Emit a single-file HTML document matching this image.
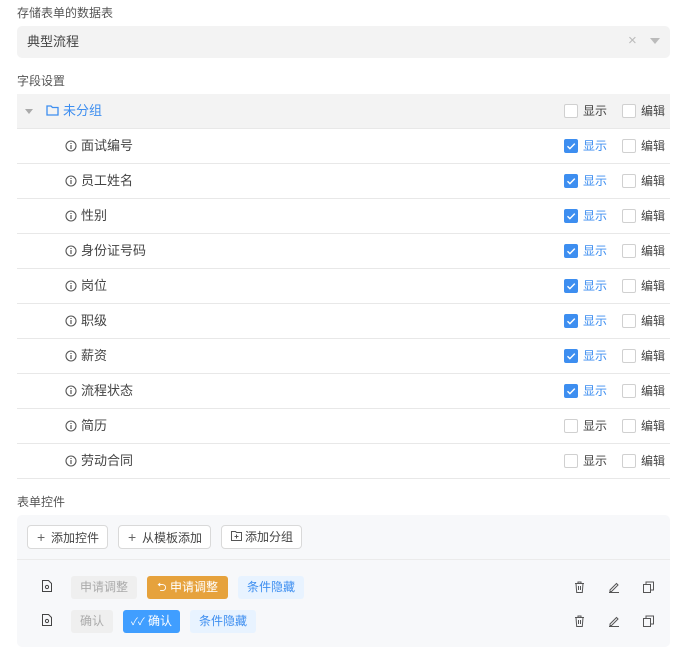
<!DOCTYPE html>
<html><head><meta charset="utf-8"><style>
*{box-sizing:border-box;margin:0;padding:0}
body{width:687px;height:659px;background:#fff;font-family:"Liberation Sans","Noto Sans CJK SC",sans-serif;font-size:13px;color:#444;position:relative;overflow:hidden}
.abs{position:absolute}
.lbl{position:absolute;left:17px;color:#555;font-size:12px;line-height:16px}
.sel{left:17px;top:26px;width:653px;height:32px;background:#f3f3f3;border-radius:5px}
.row{position:absolute;left:17px;width:653px;height:35px;border-bottom:1px solid #e8e8e8}
.cb{position:absolute;width:14px;height:14px;border:1px solid #d0d0d0;border-radius:2px;background:#fff;top:10px}
.cb.on{background:#3d8ef0;border-color:#3d8ef0}
.ct{position:absolute;top:9px;font-size:12px;line-height:16px;color:#444}
.ct.b{color:#3d8ef0}
.name{position:absolute;left:64px;top:9px;line-height:16px;color:#444}
.btn{position:absolute;top:525px;height:24px;border:1px solid #d9d9d9;border-radius:4px;background:#fff;line-height:22px;font-size:12px;color:#444;padding-left:9px}
.pl{display:inline-block;width:14px;color:#666;font-size:14px}
.tag{position:absolute;height:23px;line-height:23px;border-radius:3px;font-size:12px;text-align:center}
</style></head><body>
<div class="lbl" style="top:5px">存储表单的数据表</div>
<div class="abs sel"><span class="abs" style="left:10px;top:8px;line-height:16px">典型流程</span>
<span class="abs" style="left:611px;top:7px;color:#bbb;font-size:15px;line-height:16px">×</span>
<svg class="abs" style="left:633px;top:12px" width="10" height="6"><path d="M0 0h10L5 6z" fill="#bbb"/></svg></div>
<div class="lbl" style="top:73px">字段设置</div>

<div class="row" style="top:94px;background:#f3f3f3">
<svg class="abs" style="left:8px;top:15px" width="8" height="5"><path d="M0 0h8L4 5z" fill="#aaa"/></svg>
<svg class="abs" style="left:29px;top:11px" width="13" height="11" viewBox="0 0 13 11"><path d="M1 1h4l1.5 1.5H12V10H1z" fill="none" stroke="#3d8ef0" stroke-width="1.3"/></svg>
<span class="abs" style="left:46px;top:9px;line-height:16px;color:#3d8ef0">未分组</span>
<div class="cb" style="left:547px"></div><span class="ct" style="left:566px">显示</span>
<div class="cb" style="left:605px"></div><span class="ct" style="left:624px">编辑</span>
</div>

<div id="rows"></div>
<script>
var n=["面试编号","员工姓名","性别","身份证号码","岗位","职级","薪资","流程状态","简历","劳动合同"];
var h="";
for(var i=0;i<n.length;i++){var on=i<8;
h+='<div class="row" style="top:'+(129+i*35)+'px"><svg class="abs" style="left:48px;top:11px" width="12" height="12" viewBox="0 0 12 12"><circle cx="6" cy="6" r="5" fill="none" stroke="#555" stroke-width="1.1"/><path d="M6 5v4M6 3v1" stroke="#555" stroke-width="1.2"/></svg><span class="name">'+n[i]+'</span>'+
'<div class="cb'+(on?' on':'')+'" style="left:547px">'+(on?'<svg width="12" height="12" viewBox="0 0 12 12"><path d="M2.5 6.2l2.4 2.4L9.8 3.6" fill="none" stroke="#fff" stroke-width="1.4"/></svg>':'')+'</div><span class="ct'+(on?' b':'')+'" style="left:566px">显示</span>'+
'<div class="cb" style="left:605px"></div><span class="ct" style="left:624px">编辑</span></div>';}
document.getElementById("rows").innerHTML=h;
</script>

<div class="lbl" style="top:494px">表单控件</div>
<div class="abs" style="left:17px;top:515px;width:653px;height:132px;background:#f7f8fa;border-radius:5px"></div>
<div class="abs" style="left:17px;top:559px;width:653px;height:1px;background:#ebebeb"></div>
<div class="btn" style="left:27px;width:81px"><span class="pl">+</span>添加控件</div>
<div class="btn" style="left:118px;width:93px"><span class="pl">+</span>从模板添加</div>
<div class="btn" style="left:221px;width:81px"><svg width="11" height="10" viewBox="0 0 11 10" style="margin-right:3px"><path d="M.5 .5h4l1 1h5v8H.5z M5.5 3.5v4M3.5 5.5h4" fill="none" stroke="#555"/></svg>添加分组</div>

<svg class="abs" style="left:42px;top:580px" width="10" height="12" viewBox="0 0 10 12"><path d="M.5.5h6l3 3v8h-9z" fill="none" stroke="#444"/><circle cx="5" cy="7" r="1.6" fill="none" stroke="#444"/></svg>
<div class="tag" style="left:71px;top:576px;width:66px;background:#efefef;color:#aaa">申请调整</div>
<div class="tag" style="left:147px;top:576px;width:81px;background:#e6a23c;color:#fff">⮌ 申请调整</div>
<div class="tag" style="left:238px;top:576px;width:66px;background:#e8f3ff;color:#3d8ef0">条件隐藏</div>

<svg class="abs" style="left:42px;top:614px" width="10" height="12" viewBox="0 0 10 12"><path d="M.5.5h6l3 3v8h-9z" fill="none" stroke="#444"/><circle cx="5" cy="7" r="1.6" fill="none" stroke="#444"/></svg>
<div class="tag" style="left:71px;top:610px;width:42px;background:#efefef;color:#aaa">确认</div>
<div class="tag" style="left:123px;top:610px;width:57px;background:#409eff;color:#fff"><span style="font-size:10px">✓✓</span> 确认</div>
<div class="tag" style="left:190px;top:610px;width:66px;background:#e8f3ff;color:#3d8ef0">条件隐藏</div>

<script>
[581,615].forEach(function(y){
document.write('<svg class="abs" style="left:574px;top:'+y+'px" width="11" height="12" viewBox="0 0 11 12"><path d="M1 2.5h9M4 2.5V1h3v1.5M2 2.5l.7 9h5.6l.7-9M4.5 5v4M6.5 5v4" fill="none" stroke="#555"/></svg>');
document.write('<svg class="abs" style="left:608px;top:'+y+'px" width="12" height="12" viewBox="0 0 12 12"><path d="M2 9L8.5 2.5l1.5 1.5L3.5 10.5H2zM1 11.5h10" fill="none" stroke="#555"/></svg>');
document.write('<svg class="abs" style="left:643px;top:'+y+'px" width="11" height="12" viewBox="0 0 11 12"><path d="M.5 3.5h7v8h-7zM3 3.5V1h7.5v8H7.5" fill="none" stroke="#555"/></svg>');
});
</script>
</body></html>
